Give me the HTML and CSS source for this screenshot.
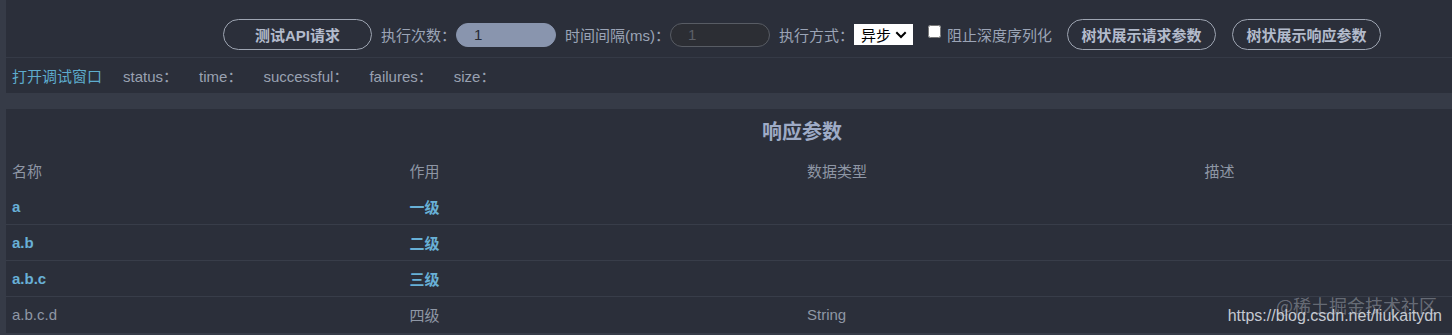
FILE: index.html
```html
<!DOCTYPE html>
<html lang="zh-CN">
<head>
<meta charset="utf-8">
<title>API 测试</title>
<link rel="stylesheet" href="styles.css">
</head>
<body>
<div class="page">
  <section class="panel top-panel">
    <div class="toolbar">
      <button class="btn btn-first">测试API请求</button>
      <span class="lbl">执行次数：</span>
      <input class="inp inp-filled" type="text" value="1">
      <span class="lbl">时间间隔(ms)：</span>
      <input class="inp inp-empty" type="text" placeholder="1">
      <span class="lbl">执行方式：</span>
      <div class="sel-wrap">
        <select class="sel"><option>异步</option><option>同步</option></select>
        <svg class="chev" width="12" height="8" viewBox="0 0 12 8"><path d="M1.3 1.3 L6 6 L10.7 1.3" fill="none" stroke="#000" stroke-width="2"/></svg>
      </div>
      <input class="chk" type="checkbox" id="deep">
      <label class="lbl chk-lbl" for="deep">阻止深度序列化</label>
      <button class="btn btn-tree">树状展示请求参数</button>
      <button class="btn btn-tree">树状展示响应参数</button>
    </div>
    <div class="statusbar">
      <a class="open-link">打开调试窗口</a>
      <span class="stat">status：</span>
      <span class="stat">time：</span>
      <span class="stat">successful：</span>
      <span class="stat">failures：</span>
      <span class="stat">size：</span>
    </div>
  </section>

  <section class="panel resp-panel">
    <h3 class="title">响应参数</h3>
    <div class="grid">
      <div class="row head">
        <div class="cell">名称</div><div class="cell">作用</div><div class="cell">数据类型</div><div class="cell">描述</div>
      </div>
      <div class="row parent">
        <div class="cell">a</div><div class="cell">一级</div><div class="cell"></div><div class="cell"></div>
      </div>
      <div class="row parent line">
        <div class="cell">a.b</div><div class="cell">二级</div><div class="cell"></div><div class="cell"></div>
      </div>
      <div class="row parent line">
        <div class="cell">a.b.c</div><div class="cell">三级</div><div class="cell"></div><div class="cell"></div>
      </div>
      <div class="row leaf line">
        <div class="cell">a.b.c.d</div><div class="cell">四级</div><div class="cell">String</div><div class="cell"></div>
      </div>
    </div>
  </section>
</div>
<div class="watermark">
  <span class="wm-juejin">@稀土掘金技术社区</span>
  <span class="wm-url">https://blog.csdn.net/liukaitydn</span>
</div>
</body>
</html>
```
FILE: styles.css
```css
html, body {
  margin: 0;
  padding: 0;
  background: #363b47;
  overflow: hidden;
  font-family: "Liberation Sans", "Noto Sans CJK SC", sans-serif;
  font-size: 15px;
  color: #9aa3b4;
}

.page {
  width: 1600px;
  padding-left: 6px;
}

.panel {
  width: 1592px;
  background: #2b2f3a;
}

.top-panel {
  height: 93px;
}

.toolbar {
  display: flex;
  justify-content: center;
  align-items: center;
  height: 31px;
  padding: 19px 0 7px;
  border-bottom: 1px solid #353a46;
}

.btn {
  box-sizing: border-box;
  width: 149px;
  height: 31px;
  border: 1px solid #9ea5b2;
  border-radius: 16px;
  background: transparent;
  color: #b3bbcc;
  font-family: "Liberation Sans", "Noto Sans CJK SC", sans-serif;
  font-size: 15px;
  font-weight: bold;
  padding: 0;
}

.btn-tree { margin-left: 15px; }
.btn-tree + .btn-tree { margin-left: 16px; }

.lbl {
  margin-left: 9px;
  color: #9ba4b6;
  white-space: nowrap;
}

.inp {
  box-sizing: border-box;
  width: 100px;
  height: 24px;
  margin-left: 0;
  border-radius: 12px;
  padding: 0 0 0 17px;
  font-family: "Liberation Sans", sans-serif;
  font-size: 15px;
  outline: none;
}

.inp-filled {
  background: #8995ae;
  border: 1px solid #8995ae;
  color: #272b35;
}

.inp-empty {
  background: #2c2e34;
  border: 1px solid #585c64;
  color: #5d6068;
}
.inp-empty::placeholder { color: #5d6068; }

.sel-wrap {
  position: relative;
  margin-left: 0;
  width: 59px;
  height: 21px;
}

.sel {
  appearance: none;
  -webkit-appearance: none;
  box-sizing: border-box;
  width: 59px;
  height: 21px;
  border: 1px solid #fff;
  border-radius: 0;
  background: #fff;
  color: #000;
  padding: 0 0 0 6px;
  font-family: "Noto Sans CJK SC", sans-serif;
  font-size: 15px;
  line-height: 19px;
}

.chev {
  position: absolute;
  right: 6px;
  top: 7px;
  pointer-events: none;
}

.chk {
  margin: 0 0 0 15px;
  width: 13px;
  height: 13px;
  position: relative;
  top: -3px;
}

.chk-lbl { margin-left: 6px; }

.statusbar {
  display: flex;
  align-items: center;
  height: 20px;
  padding: 9px 6px 6px;
  line-height: 20px;
}

.open-link {
  color: #5eaccd;
  margin-right: 21px;
  cursor: pointer;
}

.stat {
  margin-right: 21px;
  color: #99a1b1;
}

.resp-panel {
  margin-top: 16px;
  height: 224px;
}

.title {
  margin: 0;
  padding-top: 11px;
  height: 32px;
  line-height: 24px;
  text-align: center;
  font-size: 20px;
  font-weight: bold;
  color: #9eabc6;
}

.grid {
  width: 1590px;
}

.row {
  display: grid;
  grid-template-columns: repeat(4, 1fr);
  height: 36px;
  align-items: center;
}

.row.line {
  border-top: 1px solid #383d49;
  height: 35px;
}

.cell {
  padding-left: 6px;
  white-space: nowrap;
}

.head .cell { color: #8e96a4; }

.parent .cell {
  color: #68b0d6;
  font-weight: bold;
}

.leaf .cell { color: #8f97a5; }

.watermark {
  position: absolute;
  right: 10px;
  top: 294px;
  width: 222px;
  height: 38px;
}

.wm-juejin {
  position: absolute;
  right: 5px;
  top: 0;
  font-family: "Noto Sans CJK SC", sans-serif;
  font-size: 18px;
  line-height: 22px;
  color: rgba(200, 205, 215, 0.4);
  white-space: nowrap;
}

.wm-url {
  position: absolute;
  right: 0;
  top: 12px;
  font-size: 16px;
  line-height: 19px;
  color: #c5c9d1;
  white-space: nowrap;
}
```
